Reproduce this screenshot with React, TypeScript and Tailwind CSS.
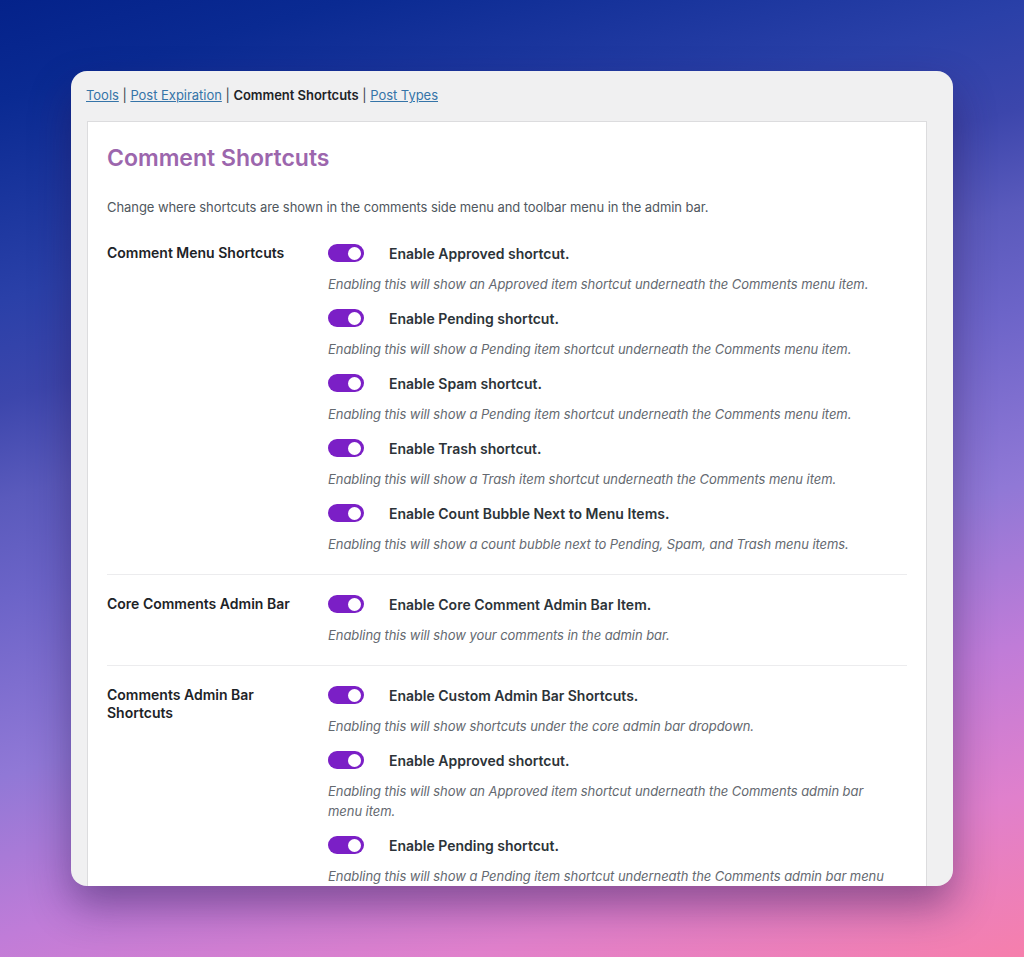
import { Fragment } from "react";

type Item = { label: string; desc: string[] };
type Section = { title: string[]; items: Item[] };

const sections: Section[] = [
  {
    title: ["Comment Menu Shortcuts"],
    items: [
      { label: "Enable Approved shortcut.", desc: ["Enabling this will show an Approved item shortcut underneath the Comments menu item."] },
      { label: "Enable Pending shortcut.", desc: ["Enabling this will show a Pending item shortcut underneath the Comments menu item."] },
      { label: "Enable Spam shortcut.", desc: ["Enabling this will show a Pending item shortcut underneath the Comments menu item."] },
      { label: "Enable Trash shortcut.", desc: ["Enabling this will show a Trash item shortcut underneath the Comments menu item."] },
      { label: "Enable Count Bubble Next to Menu Items.", desc: ["Enabling this will show a count bubble next to Pending, Spam, and Trash menu items."] },
    ],
  },
  {
    title: ["Core Comments Admin Bar"],
    items: [
      { label: "Enable Core Comment Admin Bar Item.", desc: ["Enabling this will show your comments in the admin bar."] },
    ],
  },
  {
    title: ["Comments Admin Bar", "Shortcuts"],
    items: [
      { label: "Enable Custom Admin Bar Shortcuts.", desc: ["Enabling this will show shortcuts under the core admin bar dropdown."] },
      { label: "Enable Approved shortcut.", desc: ["Enabling this will show an Approved item shortcut underneath the Comments admin bar", "menu item."] },
      { label: "Enable Pending shortcut.", desc: ["Enabling this will show a Pending item shortcut underneath the Comments admin bar menu"] },
    ],
  },
];

function Toggle() {
  return (
    <span className="flex h-[18px] w-[36px] shrink-0 items-center justify-end rounded-full bg-[#7b1fc6] pr-[3px]">
      <span className="h-[13px] w-[13px] rounded-full bg-white" />
    </span>
  );
}

export default function App() {
  return (
    <div
      className="min-h-[957px] w-full overflow-hidden pl-[71px] pt-[71px] bg-[linear-gradient(164deg,#04228a_0%,#0a2a92_8%,#2a40a8_24%,#3c46ac_32%,#5a5abc_40%,#6c64c8_48%,#9078d6_62%,#c07cd8_75%,#e080cc_87%,#f67fac_100%)]"
      style={{ fontFamily: "Inter, 'Liberation Sans', sans-serif" }}
    >
      <div className="h-[815px] w-[882px] overflow-hidden rounded-[16px] bg-[#f0f0f1] pl-[15px] pt-[14px] shadow-[0_20px_40px_rgba(40,20,80,0.45)]">
        {/* Tabs */}
        <p className="text-[13px] leading-[20px] tracking-[-0.03px] text-[#3c434a]">
          <a className="text-[#3574a8] underline">Tools</a> |{" "}
          <a className="text-[#3574a8] underline">Post Expiration</a> |{" "}
          <span className="font-semibold text-[#1d2327]">Comment Shortcuts</span> |{" "}
          <a className="text-[#3574a8] underline">Post Types</a>
        </p>

        <div className="ml-px mt-[16px] w-[840px] border border-[#dcdcde] bg-white px-[19px] pt-[21px]">
          <h1 className="text-[23px] font-semibold leading-[30px] text-[#9c66ad]">Comment Shortcuts</h1>
          <p className="mt-[24px] text-[13px] leading-[20px] tracking-[-0.07px] text-[#50575e]">
            Change where shortcuts are shown in the comments side menu and toolbar menu in the admin bar.
          </p>

          <div className="mt-[6px]">
            {sections.map((s, i) => (
              <div
                key={i}
                className={`grid grid-cols-[221px_1fr] ${i === 0 ? "pt-[20px]" : "pt-[19px]"} pb-[20px] ${i < sections.length - 1 ? "border-b border-[#ececee]" : ""}`}
              >
                <div className="pt-px text-[14px] font-semibold leading-[18px] text-[#1d2327]">
                  {s.title.map((t) => (
                    <div key={t}>{t}</div>
                  ))}
                </div>
                <div className="flex flex-col gap-[14px]">
                  {s.items.map((it, j) => (
                    <div key={j}>
                      <div className="flex h-[20px] items-center gap-[25px]">
                        <Toggle />
                        <span className="text-[14px] font-semibold text-[#2c3338]">{it.label}</span>
                      </div>
                      <p className="mt-[11px] text-[13px] italic leading-[20px] tracking-[-0.06px] text-[#646970]">
                        {it.desc.map((d, k) => (
                          <Fragment key={k}>
                            {k > 0 && <br />}
                            {d}
                          </Fragment>
                        ))}
                      </p>
                    </div>
                  ))}
                </div>
              </div>
            ))}
          </div>
        </div>
      </div>
    </div>
  );
}
